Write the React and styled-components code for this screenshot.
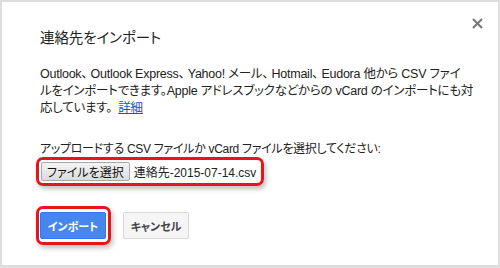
import styled, { createGlobalStyle } from 'styled-components';

const Global = createGlobalStyle`
    html, body {
        margin: 0;
        padding: 0;
        background: #ffffff;
    }
    * {
        box-sizing: border-box;
    }
`

export default function App() {
    return (
        <>
            <Global />
            <Dialog>
                <Close aria-label='閉じる'>
                    <svg width='11' height='11' viewBox='0 0 11 11'>
                        <path d='M1 1 L10 10 M10 1 L1 10' stroke='#7a7a7a' strokeWidth='2.2' />
                    </svg>
                </Close>
                <Title>連絡先をインポート</Title>
                <Description>
                    <Line>Outlook、 Outlook Express、 Yahoo! メール、 Hotmail、 Eudora 他から CSV ファイ</Line>
                    <Line>ルをインポートできます。Apple アドレスブックなどからの vCard のインポートにも対</Line>
                    <Line>応しています。 <a href='#'>詳細</a></Line>
                </Description>
                <Label>アップロードする CSV ファイルか vCard ファイルを選択してください:</Label>
                <Highlight $pad='2px 5px 2px 2px'>
                    <FileRow>
                        <FileButton>ファイルを選択</FileButton>
                        <FileName>連絡先-2015-07-14.csv</FileName>
                    </FileRow>
                </Highlight>
                <Actions>
                    <Highlight $pad='3px 2px 3px 1px'>
                        <Button $primary>インポート</Button>
                    </Highlight>
                    <Button>キャンセル</Button>
                </Actions>
            </Dialog>
        </>
    )
}

const Dialog = styled.div`
    position: relative;
    width: 500px;
    height: 268px;
    border: 2px solid #dedede;
    border-bottom-width: 3px;
    background: #ffffff;
    padding: 26px 38px 0 38px;
    font-family: "Liberation Sans", Arial, "Noto Sans CJK JP", sans-serif;
    font-feature-settings: "palt";
    color: #222222;
`

const Close = styled.button`
    position: absolute;
    top: 16px;
    right: 15px;
    border: none;
    background: none;
    padding: 0;
    width: 11px;
    height: 11px;
    display: flex;
    cursor: pointer;
`

const Title = styled.h1`
    margin: 0;
    font-size: 14.5px;
    font-weight: 400;
    line-height: 20px;
    letter-spacing: -0.1px;
    color: #222222;
`

const Description = styled.div`
    margin: 18px 0 0 0;
    font-size: 12.5px;
    line-height: 17px;

    a {
        color: #1155cc;
        text-decoration: underline;
        margin-left: 3px;
    }
`

const Line = styled.div`
    white-space: nowrap;
    letter-spacing: -0.25px;
`

const Label = styled.p`
    margin: 24px 0 0 0;
    font-size: 12px;
    line-height: 16px;
    letter-spacing: -0.3px;
    white-space: nowrap;
`

const Highlight = styled.div`
    display: inline-flex;
    padding: ${p => p.$pad};
    border: 3px solid #e8141b;
    border-radius: 7px;
    box-shadow: 2px 3px 5px rgba(0, 0, 0, 0.25);
    margin-left: -4px;
`

const FileRow = styled.div`
    display: flex;
    align-items: center;
    gap: 4px;
`

const FileButton = styled.span`
    display: inline-flex;
    align-items: center;
    height: 19px;
    padding: 0 5px;
    border: 1px solid #a9a9a9;
    border-radius: 2px;
    background: linear-gradient(#f4f4f4, #dcdcdc);
    font-size: 12px;
    color: #111111;
`

const FileName = styled.span`
    font-size: 12px;
    color: #222222;
`

const Actions = styled.div`
    display: flex;
    align-items: center;
    gap: 12px;
    margin-top: 20px;
`

const Button = styled.button`
    height: 27px;
    width: 66px;
    border-radius: 2px;
    font-family: "Liberation Sans", Arial, "Noto Sans CJK JP", sans-serif;
    font-feature-settings: "palt";
    font-size: 11px;
    font-weight: 700;
    border: 1px solid ${p => (p.$primary ? '#3079ed' : '#d9d9d9')};
    background: ${p => (p.$primary ? '#4787ed' : '#f5f5f5')};
    color: ${p => (p.$primary ? '#ffffff' : '#444444')};
    padding: 0;
`
